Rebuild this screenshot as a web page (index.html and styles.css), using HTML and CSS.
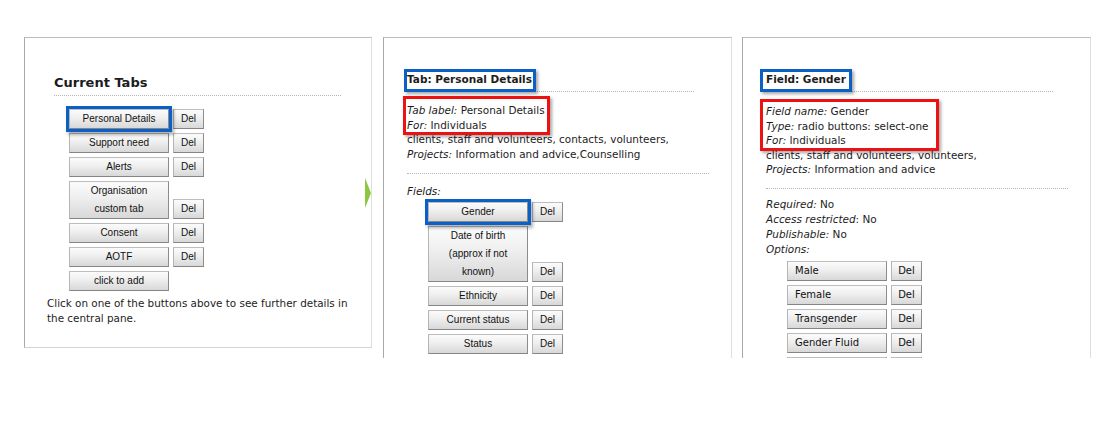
FILE: index.html
```html
<!DOCTYPE html>
<html>
<head>
<meta charset="utf-8">
<title>Tabs and fields</title>
<link rel="stylesheet" href="styles.css">
</head>
<body>
<div class="stage">
  <section class="panel panel-tabs">
    <h2 class="panel-title">Current Tabs</h2>
    <div class="btn-list list-tabs">
      <div class="btn-row"><button class="btn btn-main is-selected">Personal Details</button><button class="btn btn-del">Del</button></div>
      <div class="btn-row"><button class="btn btn-main">Support need</button><button class="btn btn-del">Del</button></div>
      <div class="btn-row"><button class="btn btn-main">Alerts</button><button class="btn btn-del">Del</button></div>
      <div class="btn-row"><button class="btn btn-main">Organisation custom tab</button><button class="btn btn-del">Del</button></div>
      <div class="btn-row"><button class="btn btn-main">Consent</button><button class="btn btn-del">Del</button></div>
      <div class="btn-row"><button class="btn btn-main">AOTF</button><button class="btn btn-del">Del</button></div>
      <div class="btn-row"><button class="btn btn-main">click to add</button></div>
    </div>
    <p class="hint">Click on one of the buttons above to see further details in the central pane.</p>
    <span class="arrow"></span>
  </section>

  <section class="panel panel-clip">
    <h3 class="pane-head"><span class="hl-blue hl-tab">Tab: Personal Details</span></h3>
    <div class="info">
      <div class="hl-red hl-tab-info">
        <div><em>Tab label:</em> Personal Details</div>
        <div><em>For:</em> Individuals</div>
      </div>
      <div>clients, staff and volunteers, contacts, volunteers,</div>
      <div><em>Projects:</em> Information and advice,Counselling</div>
    </div>
    <hr class="sep sep-tab">
    <div class="info"><em>Fields:</em></div>
    <div class="btn-list list-fields">
      <div class="btn-row"><button class="btn btn-main is-selected">Gender</button><button class="btn btn-del">Del</button></div>
      <div class="btn-row"><button class="btn btn-main">Date of birth (approx if not known)</button><button class="btn btn-del">Del</button></div>
      <div class="btn-row"><button class="btn btn-main">Ethnicity</button><button class="btn btn-del">Del</button></div>
      <div class="btn-row"><button class="btn btn-main">Current status</button><button class="btn btn-del">Del</button></div>
      <div class="btn-row"><button class="btn btn-main">Status</button><button class="btn btn-del">Del</button></div>
    </div>
  </section>

  <section class="panel panel-clip panel-field">
    <h3 class="pane-head"><span class="hl-blue hl-field">Field: Gender</span></h3>
    <div class="info">
      <div class="hl-red hl-field-info">
        <div><em>Field name:</em> Gender</div>
        <div><em>Type:</em> radio buttons: select-one</div>
        <div><em>For:</em> Individuals</div>
      </div>
      <div>clients, staff and volunteers, volunteers,</div>
      <div><em>Projects:</em> Information and advice</div>
    </div>
    <hr class="sep sep-field">
    <div class="info info-props">
      <div><em>Required:</em> No</div>
      <div><em>Access restricted</em>: No</div>
      <div><em>Publishable:</em> No</div>
      <div><em>Options:</em></div>
    </div>
    <div class="btn-list list-options">
      <div class="btn-row"><button class="btn btn-main btn-opt">Male</button><button class="btn btn-del btn-opt-del">Del</button></div>
      <div class="btn-row"><button class="btn btn-main btn-opt">Female</button><button class="btn btn-del btn-opt-del">Del</button></div>
      <div class="btn-row"><button class="btn btn-main btn-opt">Transgender</button><button class="btn btn-del btn-opt-del">Del</button></div>
      <div class="btn-row"><button class="btn btn-main btn-opt">Gender Fluid</button><button class="btn btn-del btn-opt-del">Del</button></div>
      <div class="btn-row" aria-hidden="true"><button class="btn btn-main btn-opt btn-empty"></button><button class="btn btn-del btn-opt-del btn-empty"></button></div>
    </div>
  </section>
</div>
</body>
</html>
```

FILE: styles.css
```css
* { box-sizing: border-box; }

html, body {
  margin: 0;
  padding: 0;
  background: #ffffff;
}

body {
  font-family: "DejaVu Sans", Verdana, sans-serif;
  font-size: 10.45px;
  color: #1c1c1c;
}

.stage {
  display: flex;
  align-items: flex-start;
  gap: 11px;
  padding: 37px 0 0 24px;
}

.panel {
  position: relative;
  width: 348px;
  padding: 0 0 0 23px;
  border: 1px solid #d4d4d4;
  border-top-color: #bcbcbc;
  border-left-color: #a9a9a9;
  border-right-color: #dedede;
}

.panel-tabs { height: 311px; }

.panel-clip {
  width: 349px;
  height: 321px;
  overflow: hidden;
  border-bottom: none;
}

.panel-field { margin-left: -1px; }

.panel-title {
  margin: 36px 0 0 6px;
  width: 287px;
  padding-bottom: 4px;
  font-size: 13px;
  line-height: 17px;
  font-weight: bold;
  color: #1c1c1c;
  border-bottom: 1px dotted #b4b4b4;
}

/* button lists */
.btn-list {
  display: flex;
  flex-direction: column;
  gap: 4px;
  margin-left: 21px;
}
.list-tabs { margin-top: 13px; }
.list-fields { margin-top: 3px; }
.list-options { margin-top: 4px; }

.btn-row {
  display: flex;
  align-items: flex-end;
  gap: 4px;
}

.btn {
  appearance: none;
  -webkit-appearance: none;
  margin: 0;
  padding: 0 6px;
  font-family: "Liberation Sans", Arial, sans-serif;
  font-size: 10px;
  line-height: 18px;
  color: #111;
  text-align: center;
  background: linear-gradient(#fbfbfb, #f0f0f0 40%, #d8d8d8);
  border: 1px solid;
  border-color: #bdbdbd #8c8c8c #858585 #b5b5b5;
  border-radius: 0;
}

.btn-main { width: 100px; }
.btn-del { width: 31px; padding: 0; }
.btn-empty { height: 20px; }

.btn-opt {
  font-family: "DejaVu Sans", Verdana, sans-serif;
  text-align: left;
  padding-left: 7px;
}
.btn-opt-del { font-family: "DejaVu Sans", Verdana, sans-serif; }

.is-selected {
  position: relative;
  z-index: 1;
  box-shadow: 0 0 0 3px #0d5fc8, 2px 3px 3px 3px rgba(0, 0, 0, 0.3);
}

.hint {
  margin: 5px 0 0 -1px;
  width: 312px;
  font-size: 10.4px;
  line-height: 14.5px;
}

.arrow {
  position: absolute;
  right: 0;
  top: 140px;
  width: 0;
  height: 0;
  border-left: 6px solid #8dc63f;
  border-top: 15px solid transparent;
  border-bottom: 15px solid transparent;
}

/* detail panes */
.pane-head {
  display: flex;
  align-items: flex-start;
  margin: 31px 0 0;
  width: 287px;
  height: 23px;
  font-size: 10.5px;
  font-weight: bold;
  border-bottom: 1px dotted #b4b4b4;
}

.hl-blue {
  position: relative;
  z-index: 1;
  display: block;
  height: 23px;
  background: #fff;
  border: 3px solid #0d5fc8;
  line-height: 15px;
  padding: 0 0 2px 0;
  box-shadow: 2px 2px 3px rgba(0, 0, 0, 0.35);
}
.hl-tab { margin-left: -3px; padding-right: 1px; }
.hl-field { margin-left: -6px; padding-left: 3px; padding-right: 3px; }

.info { line-height: 14.6px; }
.info-props { line-height: 15px; margin-top: 8px; }

.hl-red {
  position: relative;
  z-index: 1;
  width: fit-content;
  background: #fff;
  border: 3px solid #ee1111;
  box-shadow: 2px 2px 3px rgba(0, 0, 0, 0.35);
  margin-bottom: -3px;
}
.hl-tab-info { margin-top: 4px; margin-left: -4px; padding: 4px 2px 0 1px; }
.hl-field-info { margin-top: 7px; margin-left: -6px; padding: 2px 7px 0 3px; }

.sep {
  height: 0;
  width: 302px;
  margin: 12px 0 10px;
  border: 0;
  border-top: 1px dotted #b4b4b4;
}
.sep-field { margin: 11px 0 0; }
```
